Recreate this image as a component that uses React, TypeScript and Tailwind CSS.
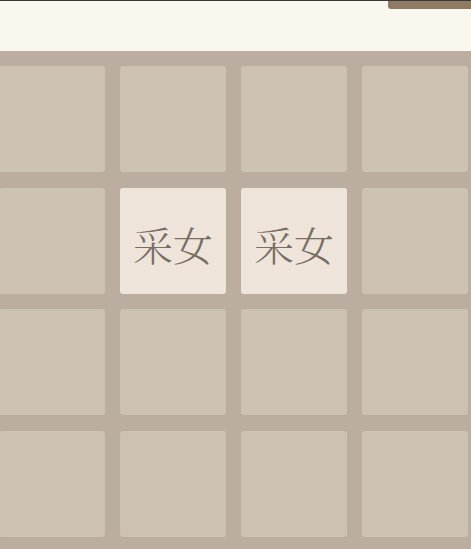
const TILES: (string | null)[] = [
  null, null, null, null,
  null, "采女", "采女", null,
  null, null, null, null,
  null, null, null, null,
];

export default function App() {
  return (
    <div className="relative h-[549px] w-[471px] overflow-hidden border-t border-[#3b3935] bg-[#faf7ef]">
      <div className="absolute right-0 top-0 h-[8px] w-[83px] rounded-bl-[3px] bg-[#8f7a66]" />
      <div className="h-[50px]" />
      <div className="-ml-[16px] w-[499px] bg-[#bbada0] p-[15px]">
        <div className="grid grid-cols-[repeat(4,106px)] gap-x-[15px] gap-y-[15.5px]">
          {TILES.map((label, i) =>
            label ? (
              <div
                key={i}
                className="flex h-[106px] items-center justify-center rounded-[3px] bg-[#eee4da] pt-[7px] text-[40px] font-light text-[#776e65]"
                style={{ fontFamily: '"Noto Serif CJK SC", "Noto Sans CJK SC", serif' }}
              >
                {label}
              </div>
            ) : (
              <div key={i} className="h-[106px] rounded-[3px] bg-[#cdc1b4]" />
            ),
          )}
        </div>
      </div>
    </div>
  );
}
